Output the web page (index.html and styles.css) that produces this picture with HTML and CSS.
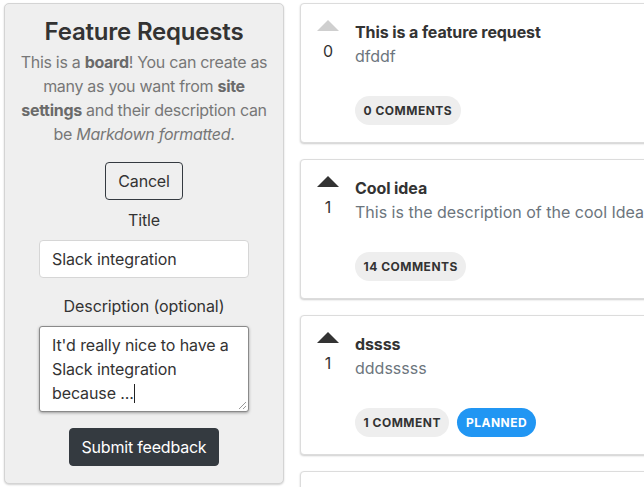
FILE: index.html
```html
<!DOCTYPE html>
<html>
<head>
<meta charset="utf-8">
<link rel="stylesheet" href="styles.css">
</head>
<body>
<div class="page">
  <aside class="board">
    <h2 class="board-title">Feature Requests</h2>
    <p class="board-desc">This is a <b>board</b>! You can create as many as you want from <b>site settings</b> and their description can be <i>Markdown formatted</i>.</p>
    <button class="btn btn-outline">Cancel</button>
    <label class="field-label">Title</label>
    <div class="input">Slack integration</div>
    <label class="field-label field-label-gap">Description (optional)</label>
    <div class="textarea">It'd really nice to have a Slack integration because ...<span class="caret"></span><span class="grip"></span></div>
    <button class="btn btn-dark">Submit feedback</button>
  </aside>
  <main class="posts">
    <div class="card">
      <div class="vote">
        <svg class="arrow arrow-off" width="22" height="11" viewBox="0 0 22 11"><polygon points="11,0 22,11 0,11"/></svg>
        <div class="count">0</div>
      </div>
      <div class="body">
        <div class="post-title">This is a feature request</div>
        <div class="post-desc">dfddf</div>
        <div class="badges"><span class="badge">0 comments</span></div>
      </div>
    </div>
    <div class="card">
      <div class="vote">
        <svg class="arrow" width="22" height="11" viewBox="0 0 22 11"><polygon points="11,0 22,11 0,11"/></svg>
        <div class="count">1</div>
      </div>
      <div class="body">
        <div class="post-title">Cool idea</div>
        <div class="post-desc">This is the description of the cool Idea which is really cool</div>
        <div class="badges"><span class="badge">14 comments</span></div>
      </div>
    </div>
    <div class="card">
      <div class="vote">
        <svg class="arrow" width="22" height="11" viewBox="0 0 22 11"><polygon points="11,0 22,11 0,11"/></svg>
        <div class="count">1</div>
      </div>
      <div class="body">
        <div class="post-title">dssss</div>
        <div class="post-desc">dddsssss</div>
        <div class="badges"><span class="badge">1 comment</span><span class="badge badge-blue">planned</span></div>
      </div>
    </div>
    <div class="card card-last"></div>
  </main>
</div>
</body>
</html>
```
FILE: styles.css
```css
* { box-sizing: border-box; }
html, body { margin: 0; padding: 0; overflow: hidden; background: #fff; }
body {
  font-family: Inter, "Noto Sans", sans-serif;
  font-size: 16px;
  line-height: 24px;
  color: #333;
}
.page {
  display: flex;
  align-items: flex-start;
  gap: 16px;
  padding: 3px 0 0 4px;
  width: 1000px;
}
.board {
  flex: 0 0 280px;
  background: #efefef;
  border: 1px solid #d4d4d4;
  border-radius: 5px;
  box-shadow: 0 1px 2px rgba(0,0,0,0.18);
  display: flex;
  flex-direction: column;
  align-items: center;
  padding: 13px 10px 17px;
  text-align: center;
}
.board-title {
  margin: 0 0 4px;
  font-size: 24px;
  line-height: 29px;
  font-weight: 600;
  color: #333;
  letter-spacing: -0.2px;
}
.board-desc {
  margin: 0 0 16px;
  color: #777;
  letter-spacing: -0.3px;
}
.board-desc b { color: #6a6a6a; font-weight: 700; }
.btn {
  font: inherit;
  border-radius: 4px;
  padding: 6px 12px;
  line-height: 24px;
  cursor: pointer;
  letter-spacing: -0.2px;
}
.btn-outline {
  background: #efefef;
  color: #333;
  border: 1px solid #343a40;
}
.btn-dark {
  margin-top: 16px;
  background: #343a40;
  color: #fff;
  border: 1px solid #343a40;
}
.field-label {
  display: block;
  margin-top: 8px;
  color: #333;
  letter-spacing: -0.1px;
}
.field-label-gap { margin-top: 16px; }
.input {
  margin-top: 8px;
  width: 210px;
  height: 38px;
  background: #fff;
  border: 1px solid #d6d6d6;
  border-radius: 4px;
  padding: 6px 12px;
  text-align: left;
  color: #333;
  letter-spacing: -0.1px;
}
.textarea {
  position: relative;
  margin-top: 8px;
  width: 210px;
  height: 86px;
  background: #fff;
  border: 1px solid #8a8a8a;
  border-radius: 3px;
  padding: 6px 12px;
  text-align: left;
  color: #333;
  letter-spacing: -0.1px;
  box-shadow: 0 1px 3px rgba(0,0,0,0.35);
}
.caret {
  display: inline-block;
  width: 1px;
  height: 19px;
  background: #222;
  vertical-align: -4px;
}
.grip {
  position: absolute;
  right: 2px;
  bottom: 2px;
  width: 7px;
  height: 7px;
  background: linear-gradient(135deg, transparent 45%, #999 45%, #999 55%, transparent 55%, transparent 75%, #999 75%, #999 85%, transparent 85%);
}
.posts {
  flex: 0 0 560px;
  display: flex;
  flex-direction: column;
  gap: 16px;
}
.card {
  display: flex;
  gap: 16px;
  height: 140px;
  background: #fff;
  border: 1px solid #dcdcdc;
  border-radius: 4px;
  box-shadow: 0 1px 2px rgba(0,0,0,0.2);
  padding: 16px;
}
.vote {
  width: 22px;
  display: flex;
  flex-direction: column;
  align-items: center;
}
.arrow { display: block; fill: #333; }
.arrow-off { fill: #cfcfcf; }
.count {
  margin-top: 8px;
  font-size: 16px;
  line-height: 24px;
  color: #333;
}
.body { flex: 1; min-width: 0; }
.post-title {
  font-weight: 700;
  color: #333;
  line-height: 24px;
  letter-spacing: -0.1px;
}
.post-desc {
  color: #6c757d;
  line-height: 24px;
  white-space: nowrap;
  margin-bottom: 28px;
}
.badges { display: flex; gap: 8px; }
.badge {
  display: inline-block;
  height: 29px;
  line-height: 29px;
  padding: 0 8.5px;
  border-radius: 15px;
  background: #eeeeee;
  color: #333;
  font-size: 12px;
  font-weight: 700;
  text-transform: uppercase;
  letter-spacing: 0.5px;
}
.badge-blue { background: #2196f3; color: #fff; }
```
